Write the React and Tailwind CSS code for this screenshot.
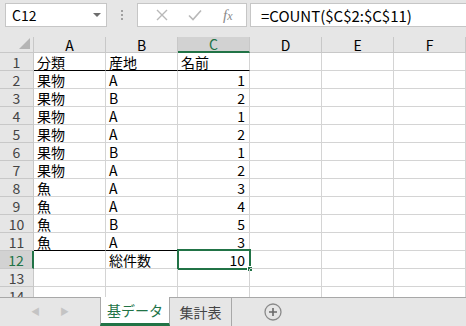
const cols = ['A', 'B', 'C', 'D', 'E', 'F']

const rows = [
  ['分類', '産地', '名前'],
  ['果物', 'A', 1],
  ['果物', 'B', 2],
  ['果物', 'A', 1],
  ['果物', 'A', 2],
  ['果物', 'B', 1],
  ['果物', 'A', 2],
  ['魚', 'A', 3],
  ['魚', 'A', 4],
  ['魚', 'B', 5],
  ['魚', 'A', 3],
  ['', '総件数', 10],
  ['', '', ''],
  ['', '', ''],
]

const font = { fontFamily: '"Noto Sans CJK JP", "Liberation Sans", sans-serif' }

function Cell({ value, r, c }) {
  const isNum = typeof value === 'number'
  // thick black lines under row 1 and row 11 (A:C)
  const black = (r === 0 || r === 10) && c < 3
  const selected = r === 11 && c === 2
  return (
    <div
      className={`relative flex h-[18px] w-[72px] shrink-0 items-center border-r border-[#d4d4d4] text-[14px] leading-none ${
        black ? 'border-b border-b-black' : 'border-b'
      } ${isNum ? 'justify-end pr-[4px]' : 'pl-[3px]'}`}
    >
      {value}
      {selected && (
        <div className="absolute left-[-1px] top-[-2px] h-[21px] w-[74px] border-2 border-[#217346]">
          <div className="absolute right-[-4px] bottom-[-4px] h-[6px] w-[6px] border border-white bg-[#217346]" />
        </div>
      )}
    </div>
  )
}

export default function App() {
  return (
    <div className="flex h-[326px] w-[466px] flex-col overflow-hidden bg-white text-black" style={font}>
      {/* ── Name box + formula bar ───────────────────────── */}
      <div className="flex h-[37px] shrink-0 items-start bg-[#e6e6e6] pt-[3px]">
        <div className="ml-[5px] flex h-[24px] w-[102px] items-center justify-between border border-[#c6c6c6] bg-white pl-[6px] pr-[5px] text-[14px] leading-none">
          <span>C12</span>
          <span className="h-0 w-0 border-x-[4px] border-t-[4px] border-x-transparent border-t-[#6d6d6d]" />
        </div>
        <div className="flex h-[24px] w-[30px] flex-col items-center justify-center gap-[2px]">
          <span className="h-[2px] w-[2px] bg-[#a0a0a0]" />
          <span className="h-[2px] w-[2px] bg-[#a0a0a0]" />
          <span className="h-[2px] w-[2px] bg-[#a0a0a0]" />
        </div>
        <div className="flex h-[24px] w-[110px] items-center border border-[#c6c6c6] bg-white">
          <svg width="14" height="14" viewBox="0 0 14 14" className="ml-[17px]">
            <path d="M2 2L12 12M12 2L2 12" stroke="#b8b8b8" strokeWidth="1.4" />
          </svg>
          <svg width="16" height="14" viewBox="0 0 16 14" className="ml-[18px]">
            <path d="M2 7.5L6 11.5L14 2.5" stroke="#b8b8b8" strokeWidth="1.6" fill="none" />
          </svg>
          <span className="ml-[20px] text-[15px] italic leading-none text-[#8a8a8a]" style={{ fontFamily: '"Liberation Serif", serif' }}>
            f<span className="text-[12px]">x</span>
          </span>
        </div>
        <div className="ml-[3px] flex h-[24px] flex-1 items-center border border-r-0 border-[#c6c6c6] bg-white pl-[10px] text-[15px] leading-none">
          =COUNT($C$2:$C$11)
        </div>
      </div>

      {/* ── Column headers ─────────────────────────────── */}
      <div className="flex h-[16px] shrink-0 bg-[#e6e6e6]">
        <div className="relative h-[16px] w-[34px] shrink-0 border-r border-b border-[#c8c8c8]">
          <span className="absolute right-[3px] bottom-[3px] h-0 w-0" style={{ borderBottom: '11px solid #b4b4b4', borderLeft: '11px solid transparent' }} />
        </div>
        {cols.map((c) => (
          <div
            key={c}
            className={`flex h-[16px] w-[72px] shrink-0 items-center justify-center border-r border-[#c8c8c8] text-[14px] leading-none ${
              c === 'C' ? 'border-b-2 border-b-[#217346] bg-[#d2d2d2] text-[#217346]' : 'border-b'
            }`}
          >
            {c}
          </div>
        ))}
      </div>

      {/* ── Grid ───────────────────────────────────────── */}
      <div className="flex-1 overflow-hidden">
        {rows.map((row, r) => (
          <div key={r} className="flex">
            <div
              className={`flex h-[18px] w-[34px] shrink-0 items-center justify-center border-b border-[#c8c8c8] text-[14px] leading-none ${
                r === 11 ? 'border-r-2 border-r-[#217346] bg-[#d2d2d2] text-[#217346]' : 'border-r bg-[#e6e6e6] text-[#444]'
              }`}
            >
              {r + 1}
            </div>
            {cols.map((c, ci) => (
              <Cell key={c} value={ci < 3 ? row[ci] : ''} r={r} c={ci} />
            ))}
          </div>
        ))}
      </div>

      {/* ── Sheet tabs ─────────────────────────────────── */}
      <div className="flex h-[29px] shrink-0 items-stretch border-t border-[#a8a8a8] bg-[#e6e6e6]">
        <div className="flex w-[100px] items-center justify-center gap-[20px] text-[9px] text-[#c4c4c4]">
          <span>◀</span>
          <span>▶</span>
        </div>
        <div className="-mt-px flex w-[70px] items-center justify-center border-x border-[#a8a8a8] border-b-[3px] border-b-[#217346] bg-white text-[14px] leading-none text-[#217346]">
          基データ
        </div>
        <div className="flex w-[62px] items-center justify-center border-r border-[#a8a8a8] text-[14px] leading-none text-[#444]">
          集計表
        </div>
        <div className="flex flex-1 items-center pl-[32px]">
          <svg width="18" height="18" viewBox="0 0 18 18">
            <circle cx="9" cy="9" r="8" fill="none" stroke="#8a8a8a" strokeWidth="1.3" />
            <path d="M9 5V13M5 9H13" stroke="#6a6a6a" strokeWidth="1.6" />
          </svg>
        </div>
      </div>
    </div>
  )
}
